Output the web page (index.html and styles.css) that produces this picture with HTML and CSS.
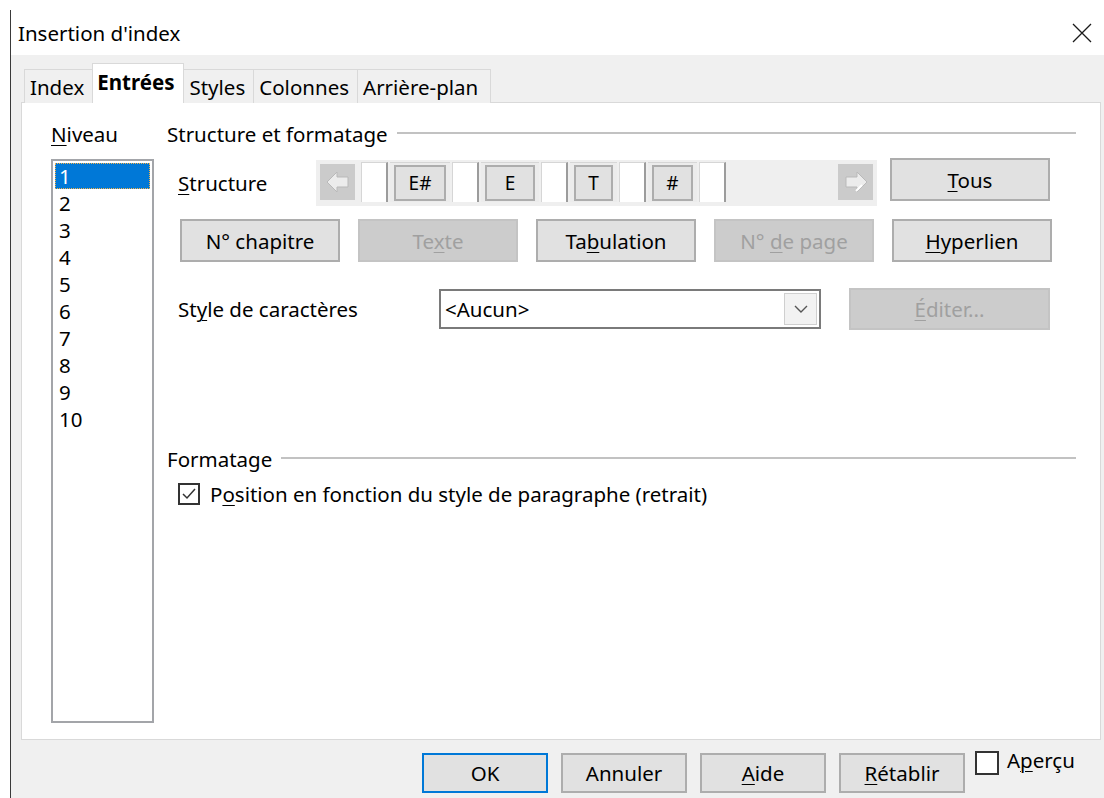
FILE: index.html
```html
<!DOCTYPE html>
<html lang="fr">
<head>
<meta charset="utf-8">
<title>Insertion d'index</title>
<link rel="stylesheet" href="styles.css">
</head>
<body>
<div class="window">
  <div class="titlebar">
    <span class="title">Insertion d'index</span>
    <svg class="close" width="20" height="20" viewBox="0 0 20 20"><path d="M1 1 L19 19 M19 1 L1 19" stroke="#1a1a1a" stroke-width="1.3" fill="none"/></svg>
  </div>
  <div class="dialog">
    <div class="tabs">
      <div class="tab">Index</div>
      <div class="tab active">Entrées</div>
      <div class="tab">Styles</div>
      <div class="tab">Colonnes</div>
      <div class="tab">Arrière-plan</div>
    </div>
    <div class="panel">
      <div class="left-col">
        <div class="label-row"><u>N</u>iveau</div>
        <div class="listbox">
          <div class="item selected">1</div>
          <div class="item">2</div>
          <div class="item">3</div>
          <div class="item">4</div>
          <div class="item">5</div>
          <div class="item">6</div>
          <div class="item">7</div>
          <div class="item">8</div>
          <div class="item">9</div>
          <div class="item">10</div>
        </div>
      </div>
      <div class="right-col">
        <div class="group-head"><span>Structure et formatage</span><div class="rule"></div></div>

        <div class="structure-row">
          <div class="row-label struct-label"><u>S</u>tructure</div>
          <div class="struct-bar">
            <div class="arrow-btn">
              <svg width="24" height="22" viewBox="0 0 24 22"><path d="M1 11 L11 1 L11 6 L22 6 L22 16 L11 16 L11 21 Z" fill="#ececec" stroke="#b9b9b9" stroke-width="1"/></svg>
            </div>
            <div class="field"></div>
            <div class="token"><span class="tok w-eh">E#</span></div>
            <div class="field"></div>
            <div class="token"><span class="tok w-e">E</span></div>
            <div class="field"></div>
            <div class="token"><span class="tok w-t">T</span></div>
            <div class="field"></div>
            <div class="token"><span class="tok w-h">#</span></div>
            <div class="field"></div>
            <div class="bar-fill"></div>
            <div class="arrow-btn">
              <svg width="24" height="22" viewBox="0 0 24 22"><path d="M23 11 L13 1 L13 6 L2 6 L2 16 L13 16 L13 21 Z" fill="#ececec" stroke="#b9b9b9" stroke-width="1"/><path d="M12 20 L18 14" stroke="#ffffff" stroke-width="2"/></svg>
            </div>
          </div>
          <button class="btn wide tous"><span><u>T</u>ous</span></button>
        </div>

        <div class="button-row">
          <button class="btn wide"><span>N° chapitre</span></button>
          <button class="btn wide disabled"><span>Te<u>x</u>te</span></button>
          <button class="btn wide"><span>Ta<u>b</u>ulation</span></button>
          <button class="btn wide disabled"><span>N° <u>d</u>e page</span></button>
          <button class="btn wide"><span><u>H</u>yperlien</span></button>
        </div>

        <div class="style-row">
          <div class="row-label style-label">St<u>y</u>le de caractères</div>
          <div class="combo">
            <span class="combo-text">&lt;Aucun&gt;</span>
            <span class="combo-btn">
              <svg width="14" height="8" viewBox="0 0 14 8"><path d="M1 1 L7 7 L13 1" stroke="#555" stroke-width="1.4" fill="none"/></svg>
            </span>
          </div>
          <button class="btn edit disabled"><span><u>É</u>diter...</span></button>
        </div>

        <div class="group-head formatage"><span>Formatage</span><div class="rule"></div></div>

        <label class="check-row">
          <span class="checkbox">
            <svg width="18" height="18" viewBox="0 0 18 18"><path d="M3 9 L7 13 L15 4" stroke="#333" stroke-width="1.5" fill="none"/></svg>
          </span>
          <span>P<u>o</u>sition en fonction du style de paragraphe (retrait)</span>
        </label>
      </div>
    </div>
    <div class="footer">
      <button class="btn foot default"><span>OK</span></button>
      <button class="btn foot"><span>Annuler</span></button>
      <button class="btn foot"><span><u>A</u>ide</span></button>
      <button class="btn foot"><span><u>R</u>établir</span></button>
      <label class="preview">
        <span class="checkbox empty"></span>
        <span class="preview-text">A<u>p</u>erçu</span>
      </label>
    </div>
  </div>
</div>
</body>
</html>
```
FILE: styles.css
```css
* { box-sizing: border-box; }

html, body {
  margin: 0;
  background: #ffffff;
}

body {
  width: 1104px;
  height: 798px;
  overflow: hidden;
  font-family: "Noto Sans", "Open Sans", sans-serif;
  font-size: 20.5px;
  color: #000;
}

u { text-decoration-thickness: 1px; text-underline-offset: 3px; }

.window {
  margin: 10px 0 0 10px;
  height: 788px;
  border-left: 1px solid #3a3a3a;
  display: flex;
  flex-direction: column;
}

.titlebar {
  height: 45px;
  background: #fff;
  display: flex;
  align-items: center;
  justify-content: space-between;
  padding: 0 12px 0 7px;
}
.close { display: block; }

.dialog {
  flex: 1;
  background: #f0f0f0;
  padding: 9px 3px 0 10px;
  display: flex;
  flex-direction: column;
}

/* tab strip */
.tabs {
  display: flex;
  align-items: flex-end;
  padding-left: 3px;
  height: 39px;
  position: relative;
  z-index: 1;
  margin-bottom: -1px;
}
.tab {
  height: 34px;
  padding: 0 8px 0 5px;
  display: flex;
  align-items: center;
  border: 1px solid #d9d9d9;
  border-bottom: none;
  margin-right: -1px;
  background: #f0f0f0;
}
.tab:last-child { padding-right: 12px; }
.tab.active {
  height: 40px;
  background: #fff;
  font-weight: bold;
  padding: 0 9px 4px 4px;
  position: relative;
  z-index: 1;
}

/* page body */
.panel {
  height: 638px;
  background: #fff;
  border: 1px solid #d9d9d9;
  display: grid;
  grid-template-columns: 103px 1fr;
  column-gap: 13px;
  padding: 19px 24px 0 29px;
  align-items: start;
}

.label-row {
  height: 24px;
  line-height: 24px;
}

.listbox {
  margin-top: 13px;
  height: 564px;
  border: 2px solid #a3a5a9;
  padding: 2px 2px;
  background: #fff;
}
.item {
  height: 27px;
  line-height: 26px;
  padding-left: 4px;
}
.item.selected {
  background: #0078d7;
  color: #fff;
  border: 1px dotted #f3b24a;
  line-height: 24px;
  padding-left: 3px;
  height: 26px;
  margin-bottom: 1px;
}

/* group heading with rule */
.group-head {
  display: flex;
  align-items: center;
  height: 24px;
  gap: 9px;
}
.group-head .rule {
  flex: 1;
  height: 2px;
  background: #c2c2c2;
  margin-top: -3px;
}

.row-label { padding-left: 11px; }

/* structure editor */
.structure-row {
  display: flex;
  align-items: flex-start;
  margin-top: 12px;
}
.struct-label {
  width: 149px;
  padding-top: 11px;
}
.struct-bar {
  width: 561px;
  height: 46px;
  margin-top: 2px;
  background: #efefef;
  display: flex;
  align-items: flex-start;
  padding: 2px 4px 0 4px;
}
.arrow-btn {
  width: 35px;
  height: 36px;
  margin-top: 2px;
  background: #cbcbcb;
  display: flex;
  align-items: center;
  justify-content: center;
  margin-right: 6px;
}
.arrow-btn:last-child { margin-right: 0; }
.field {
  width: 27px;
  height: 40px;
  background: #fff;
  border-top: 1px solid #d6d6d6;
  border-left: 1px solid #d6d6d6;
  border-right: 2px solid #9c9c9c;
}
.token {
  height: 40px;
  padding: 2px 4px 0 4px;
  border-top: 1px solid #d6d6d6;
  background: #ececec;
  margin: 0 2px;
}
.tok {
  display: flex;
  align-items: center;
  justify-content: center;
  height: 36px;
  background: #e1e1e1;
  border: 2px solid #adadad;
  font-size: 19px;
}
.w-eh { width: 52px; }
.w-e { width: 50px; }
.w-t { width: 39px; }
.w-h { width: 41px; }
.bar-fill { flex: 1; }

/* push buttons */
.btn {
  font: inherit;
  color: #000;
  background: #e1e1e1;
  border: 2px solid #adadad;
  padding: 0;
  margin: 0;
  display: flex;
  align-items: center;
  justify-content: center;
  white-space: nowrap;
}
.btn.disabled {
  background: #cccccc;
  border-color: #c4c4c4;
  color: #a0a0a0;
}
.btn.wide { width: 160px; height: 43px; }
.tous { margin-left: 13px; }

.button-row {
  display: flex;
  gap: 18px;
  margin-top: 13px;
  padding-left: 13px;
}

/* character style row */
.style-row {
  display: flex;
  align-items: center;
  margin-top: 26px;
}
.style-label { width: 272px; }
.combo {
  width: 382px;
  height: 40px;
  border: 2px solid #7a7a7a;
  background: #fff;
  display: flex;
  align-items: center;
  justify-content: space-between;
  padding: 0 2px 0 4px;
}
.combo-btn {
  width: 33px;
  height: 32px;
  border: 1px solid #cfcfcf;
  background: #f2f2f2;
  display: flex;
  align-items: center;
  justify-content: center;
}
.btn.edit {
  width: 201px;
  height: 42px;
  margin-left: 28px;
}

.formatage { margin-top: 117px; }

.check-row {
  display: flex;
  align-items: center;
  gap: 10px;
  margin-top: 9px;
  padding-left: 11px;
}
.checkbox {
  width: 22px;
  height: 22px;
  border: 2px solid #333;
  background: #fff;
  display: flex;
  align-items: center;
  justify-content: center;
}
.checkbox.empty { width: 24px; height: 24px; }

/* footer buttons */
.footer {
  display: flex;
  align-items: flex-start;
  gap: 13px;
  padding: 11px 0 0 401px;
}
.btn.foot {
  width: 126px;
  height: 40px;
  margin-top: 2px;
}
.btn.default { border-color: #0078d7; }
.preview {
  display: flex;
  align-items: flex-start;
  gap: 8px;
  margin-left: -3px;
}
.preview-text { margin-top: -5px; }
```
